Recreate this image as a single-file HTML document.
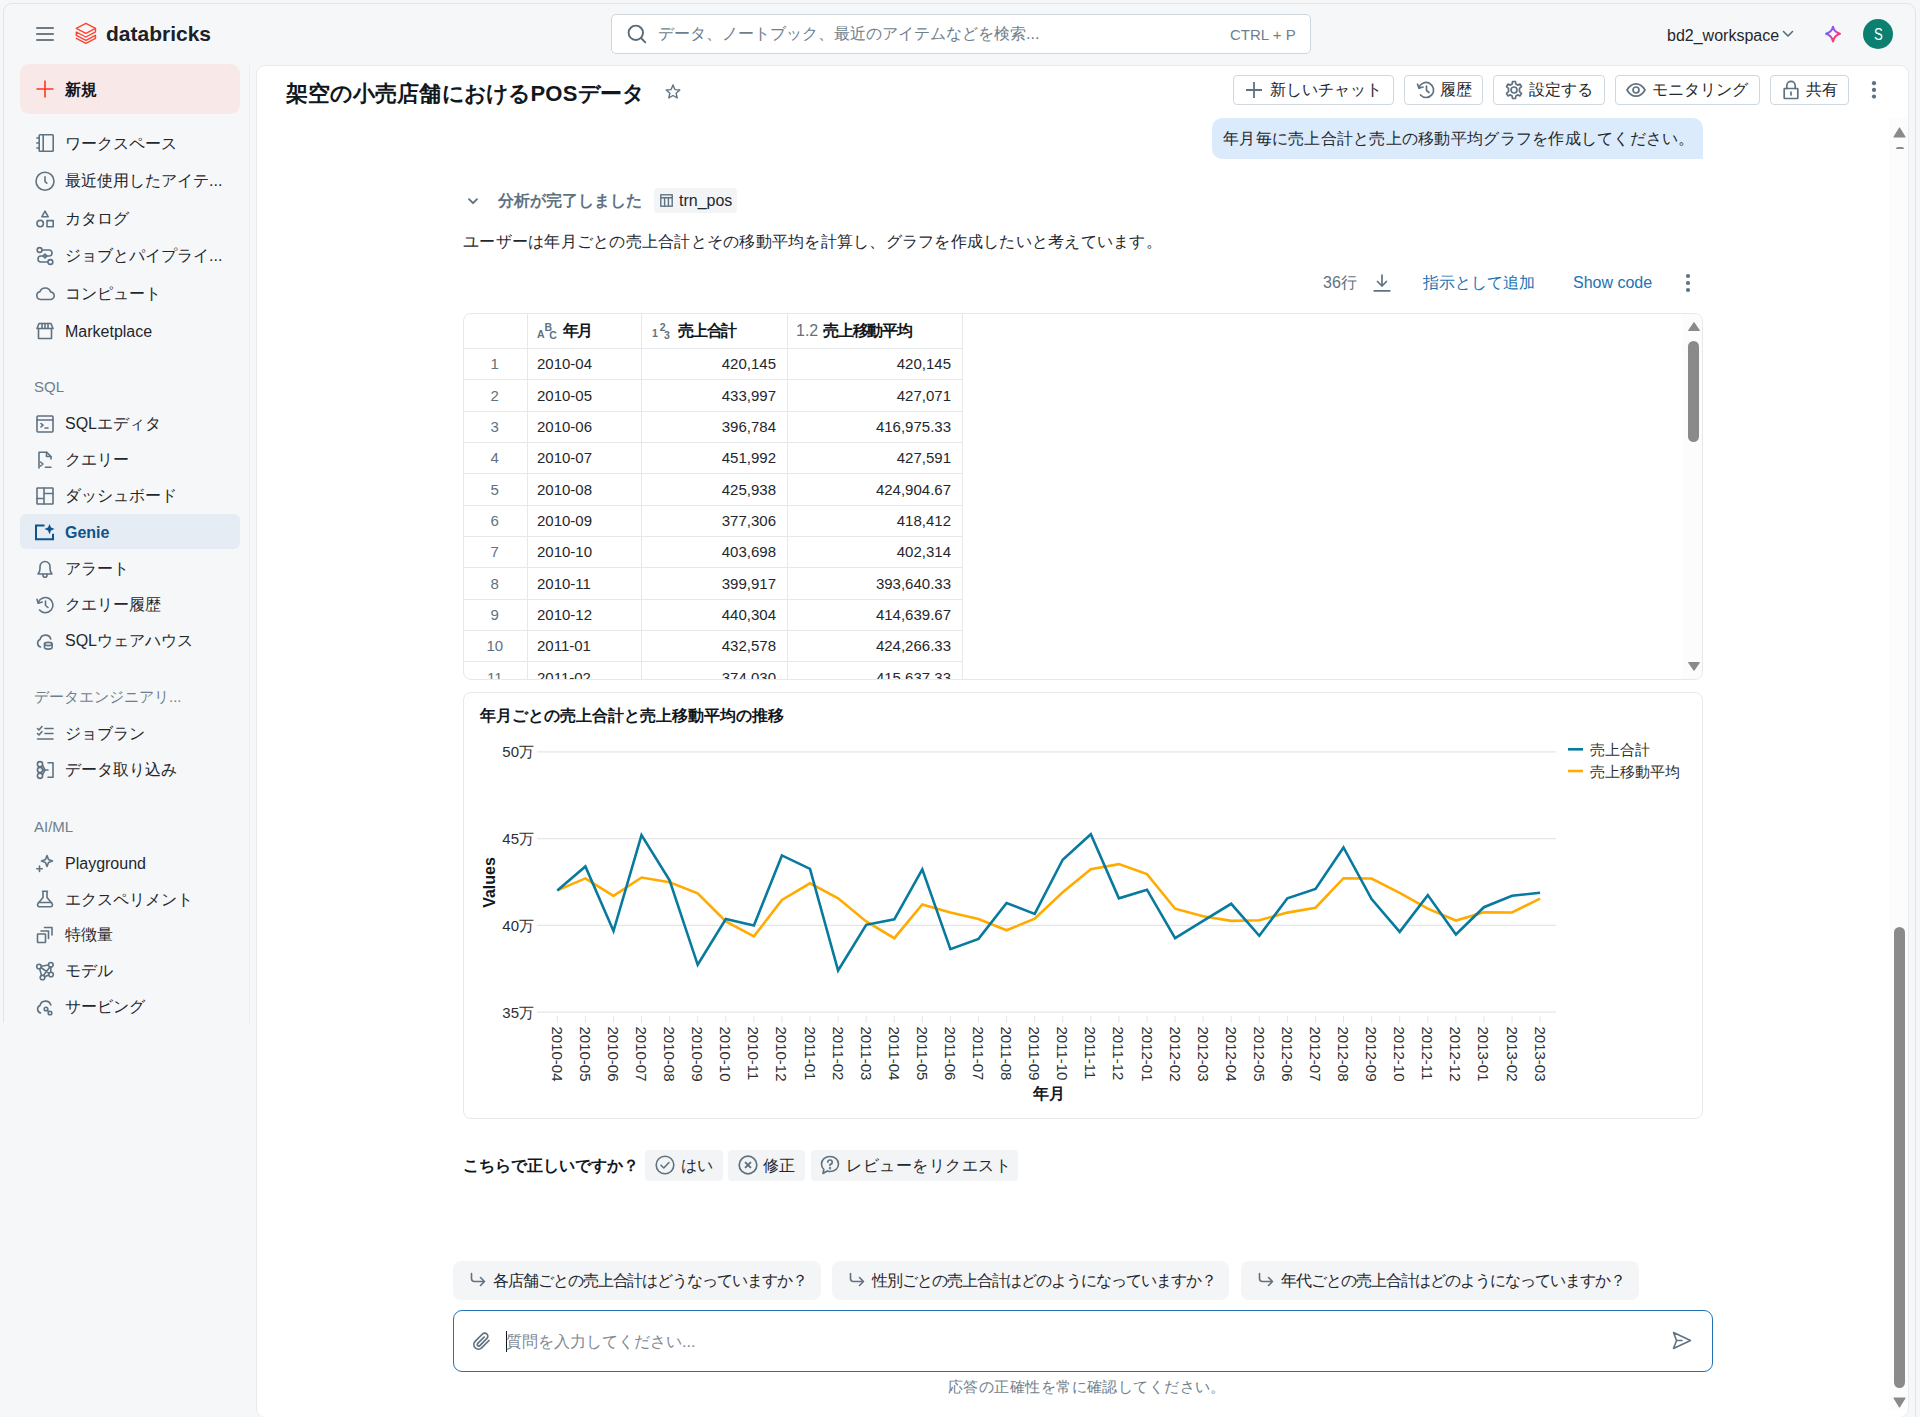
<!DOCTYPE html>
<html><head><meta charset="utf-8"><title>Genie</title><style>
*{box-sizing:border-box;margin:0;padding:0}
html,body{width:1920px;height:1417px;overflow:hidden;background:#f6f7f9;font-family:"Liberation Sans",sans-serif;color:#1f272d}
.a{position:absolute;white-space:nowrap}
.a i{display:inline-block;font-style:normal;text-align:left}
svg{display:block;overflow:visible}
.btn{position:absolute;height:30px;background:#fff;border:1px solid #cfd7df;border-radius:4px}
.chip{position:absolute;background:#f2f4f6;border-radius:4px}
</style></head><body>
<div class="a" style="left:3px;top:3px;width:1913px;height:1600px;border:1px solid #e4e4e4;border-radius:9px"></div>
<div class="a" style="left:0;top:1023px;width:12px;height:400px;background:#f6f7f9"></div>
<svg class="a" style="left:36px;top:27px" width="18" height="14" viewBox="0 0 18 14" ><path d="M0.8 1h16.4M0.8 7h16.4M0.8 13h16.4" stroke="#45535e" stroke-width="1.6" stroke-linecap="round"/></svg>
<svg class="a" style="left:75px;top:22px" width="22" height="23" viewBox="0 0 22 23" ><g fill="none" stroke="#ff4330" stroke-width="1.4" stroke-linejoin="round" stroke-linecap="round"><path d="M10.9 1.3 L20.5 6.4 L10.9 11.3 L1.3 6.4 Z"/><path d="M20.5 6.4 V9.8 L10.9 15 L1.3 10 V13.3 L10.9 18.4 L20.5 13.3 V16.3 L10.9 21.4 L1.3 16.3"/></g></svg>
<div class="a" style="left:106px;top:19.0px;font-size:21px;line-height:30px;color:#1b2126;font-weight:bold;">databricks</div>
<div class="a" style="left:611px;top:14px;width:700px;height:40px;background:#fff;border:1px solid #cdd5dd;border-radius:5px"></div>
<svg class="a" style="left:627px;top:24px" width="20" height="20" viewBox="0 0 20 20" ><circle cx="8.8" cy="8.8" r="7.2" fill="none" stroke="#5a6b78" stroke-width="1.9"/><path d="M14 14 L18.3 18.3" stroke="#5a6b78" stroke-width="1.9" stroke-linecap="round"/></svg>
<div class="a" style="left:658px;top:22.0px;font-size:16px;line-height:24px;color:#6f7e8b;font-weight:normal;"><i style="width:16px">デ</i><i style="width:16px">ー</i><i style="width:16px">タ</i><i style="width:16px">、</i><i style="width:16px">ノ</i><i style="width:16px">ー</i><i style="width:16px">ト</i><i style="width:16px">ブ</i><i style="width:16px">ッ</i><i style="width:16px">ク</i><i style="width:16px">、</i><i style="width:16px">最</i><i style="width:16px">近</i><i style="width:16px">の</i><i style="width:16px">ア</i><i style="width:16px">イ</i><i style="width:16px">テ</i><i style="width:16px">ム</i><i style="width:16px">な</i><i style="width:16px">ど</i><i style="width:16px">を</i><i style="width:16px">検</i><i style="width:16px">索</i>...</div>
<div class="a" style="left:1230px;top:24.0px;font-size:15px;line-height:22px;color:#6f7e8b;font-weight:normal;">CTRL + P</div>
<div class="a" style="left:1667px;top:24.0px;font-size:16px;line-height:24px;color:#1f272d;font-weight:normal;">bd2_workspace</div>
<svg class="a" style="left:1782px;top:30px" width="12" height="8" viewBox="0 0 12 8" ><path d="M1.5 1.5 L6 6 L10.5 1.5" fill="none" stroke="#5a6b78" stroke-width="1.6" stroke-linecap="round" stroke-linejoin="round"/></svg>
<svg class="a" style="left:1823px;top:24px" width="20" height="20" viewBox="0 0 20 20" ><defs><linearGradient id="sg" x1="0.1" y1="0.1" x2="0.9" y2="0.9"><stop offset="0" stop-color="#5b6ff2"/><stop offset=".45" stop-color="#b548e8"/><stop offset=".75" stop-color="#ff3a6e"/><stop offset="1" stop-color="#ff3a4a"/></linearGradient></defs><path d="M10 2.8 C10.9 6.6 12.6 8.6 17 9.7 C12.6 10.8 10.9 12.8 10 17.6 C9.1 12.8 7.4 10.8 3 9.7 C7.4 8.6 9.1 6.6 10 2.8 Z" fill="none" stroke="url(#sg)" stroke-width="2" stroke-linejoin="round"/></svg>
<div class="a" style="left:1863px;top:19px;width:30px;height:30px;border-radius:50%;background:#0b7f70;color:#fff;font-size:16px;line-height:31px;text-align:center"><span style="display:inline-block;transform:scaleX(0.82)">S</span></div>
<div class="a" style="left:20px;top:64px;width:220px;height:50px;background:#f9e8e8;border-radius:9px"></div>
<svg class="a" style="left:36px;top:80px" width="18" height="18" viewBox="0 0 18 18" ><path d="M9 0.5V17.5M0.5 9H17.5" stroke="#ff3621" stroke-width="1.6"/></svg>
<div class="a" style="left:65px;top:77.5px;font-size:16px;line-height:24px;color:#11171c;font-weight:bold;"><i style="width:16px">新</i><i style="width:16px">規</i></div>
<div class="a" style="left:20px;top:514px;width:220px;height:35px;background:#e5ecf3;border-radius:6px"></div>
<svg class="a" style="left:36px;top:134px" width="18" height="18" viewBox="0 0 18 18" ><g fill="none" stroke="#5f7281" stroke-width="1.6" stroke-linecap="round" stroke-linejoin="round"><rect x="3.2" y="0.8" width="14" height="16.5" rx="0.8"/><path d="M7.2 0.8V17.3M0.8 4h2.4M0.8 9h2.4M0.8 14h2.4"/></g></svg>
<div class="a" style="left:65px;top:131.5px;font-size:16px;line-height:24px;color:#1f272d;font-weight:normal;"><i style="width:16px">ワ</i><i style="width:16px">ー</i><i style="width:16px">ク</i><i style="width:16px">ス</i><i style="width:16px">ペ</i><i style="width:16px">ー</i><i style="width:16px">ス</i></div>
<svg class="a" style="left:36px;top:172px" width="18" height="18" viewBox="0 0 18 18" ><g fill="none" stroke="#5f7281" stroke-width="1.6" stroke-linecap="round" stroke-linejoin="round"><circle cx="9" cy="9.2" r="9"/><path d="M9 4.8V9.5L10.8 11.2"/></g></svg>
<div class="a" style="left:65px;top:169.0px;font-size:16px;line-height:24px;color:#1f272d;font-weight:normal;"><i style="width:16px">最</i><i style="width:16px">近</i><i style="width:16px">使</i><i style="width:16px">用</i><i style="width:16px">し</i><i style="width:16px">た</i><i style="width:16px">ア</i><i style="width:16px">イ</i><i style="width:16px">テ</i>...</div>
<svg class="a" style="left:36px;top:210px" width="18" height="18" viewBox="0 0 18 18" ><g fill="none" stroke="#5f7281" stroke-width="1.6" stroke-linecap="round" stroke-linejoin="round"><path d="M9 1.2L12.2 6.8H5.8Z"/><circle cx="4.2" cy="13.6" r="3.2"/><rect x="11" y="10.6" width="6.2" height="6.2"/></g></svg>
<div class="a" style="left:65px;top:206.5px;font-size:16px;line-height:24px;color:#1f272d;font-weight:normal;"><i style="width:16px">カ</i><i style="width:16px">タ</i><i style="width:16px">ロ</i><i style="width:16px">グ</i></div>
<svg class="a" style="left:36px;top:247px" width="18" height="18" viewBox="0 0 18 18" ><g fill="none" stroke="#5f7281" stroke-width="1.6" stroke-linecap="round" stroke-linejoin="round"><circle cx="3.6" cy="3" r="2.4"/><circle cx="14.4" cy="15" r="2.4"/><path d="M6 3H13A3 3 0 0 1 13 9H5A3 3 0 0 0 5 15H12"/><path d="M9 7L11 9L9 11L7 9Z"/></g></svg>
<div class="a" style="left:65px;top:244.0px;font-size:16px;line-height:24px;color:#1f272d;font-weight:normal;"><i style="width:16px">ジ</i><i style="width:16px">ョ</i><i style="width:16px">ブ</i><i style="width:16px">と</i><i style="width:16px">パ</i><i style="width:16px">イ</i><i style="width:16px">プ</i><i style="width:16px">ラ</i><i style="width:16px">イ</i>...</div>
<svg class="a" style="left:36px;top:284px" width="18" height="18" viewBox="0 0 18 18" ><g fill="none" stroke="#5f7281" stroke-width="1.6" stroke-linecap="round" stroke-linejoin="round"><path d="M4.5 15.5H14.2A3.8 3.8 0 0 0 14.6 7.9A5.6 5.6 0 0 0 4 7.6A4 4 0 0 0 4.5 15.5Z"/></g></svg>
<div class="a" style="left:65px;top:281.5px;font-size:16px;line-height:24px;color:#1f272d;font-weight:normal;"><i style="width:16px">コ</i><i style="width:16px">ン</i><i style="width:16px">ピ</i><i style="width:16px">ュ</i><i style="width:16px">ー</i><i style="width:16px">ト</i></div>
<svg class="a" style="left:36px;top:322px" width="18" height="18" viewBox="0 0 18 18" ><g fill="none" stroke="#5f7281" stroke-width="1.6" stroke-linecap="round" stroke-linejoin="round"><path d="M1 6.5L3 1.5H15L17 6.5Z"/><path d="M6 1.5V6.5M9 1.5V6.5M12 1.5V6.5"/><path d="M2.5 6.5V16.5H15.5V6.5"/></g></svg>
<div class="a" style="left:65px;top:319.5px;font-size:16px;line-height:24px;color:#1f272d;font-weight:normal;">Marketplace</div>
<svg class="a" style="left:36px;top:415px" width="18" height="18" viewBox="0 0 18 18" ><g fill="none" stroke="#5f7281" stroke-width="1.6" stroke-linecap="round" stroke-linejoin="round"><rect x="1" y="1" width="16" height="16" rx="1"/><path d="M1 5H17M5 8.5L7 10.2L5 12M9 13H12"/></g></svg>
<div class="a" style="left:65px;top:412.0px;font-size:16px;line-height:24px;color:#1f272d;font-weight:normal;">SQL<i style="width:16px">エ</i><i style="width:16px">デ</i><i style="width:16px">ィ</i><i style="width:16px">タ</i></div>
<svg class="a" style="left:36px;top:451px" width="18" height="18" viewBox="0 0 18 18" ><g fill="none" stroke="#5f7281" stroke-width="1.6" stroke-linecap="round" stroke-linejoin="round"><path d="M3 17V1.2H10.5L15 5.5V8"/><path d="M10.5 1.2V5.5H15"/><path d="M4.5 11L7 13L4.5 15M9.5 16.2H15"/></g></svg>
<div class="a" style="left:65px;top:448.0px;font-size:16px;line-height:24px;color:#1f272d;font-weight:normal;"><i style="width:16px">ク</i><i style="width:16px">エ</i><i style="width:16px">リ</i><i style="width:16px">ー</i></div>
<svg class="a" style="left:36px;top:487px" width="18" height="18" viewBox="0 0 18 18" ><g fill="none" stroke="#5f7281" stroke-width="1.6" stroke-linecap="round" stroke-linejoin="round"><rect x="1" y="1" width="16" height="16" rx="0.5"/><path d="M8 1V17M1 11.5H8M8 6.5H17"/></g></svg>
<div class="a" style="left:65px;top:484.0px;font-size:16px;line-height:24px;color:#1f272d;font-weight:normal;"><i style="width:16px">ダ</i><i style="width:16px">ッ</i><i style="width:16px">シ</i><i style="width:16px">ュ</i><i style="width:16px">ボ</i><i style="width:16px">ー</i><i style="width:16px">ド</i></div>
<svg class="a" style="left:35px;top:524px" width="18" height="18" viewBox="0 0 18 18" ><g fill="none" stroke="#0e538b" stroke-width="2" stroke-linecap="square"><path d="M8.5 1.5H1V15.2H18V10.8"/></g><path d="M14.5 0L16 3.6L19.6 5.1L16 6.6L14.5 10.2L13 6.6L9.4 5.1L13 3.6Z" fill="#0e538b"/></svg>
<div class="a" style="left:65px;top:521.3px;font-size:16px;line-height:24px;color:#0e538b;font-weight:bold;">Genie</div>
<svg class="a" style="left:36px;top:560px" width="18" height="18" viewBox="0 0 18 18" ><g fill="none" stroke="#5f7281" stroke-width="1.6" stroke-linecap="round" stroke-linejoin="round"><path d="M2 14H16C14.5 12.5 14 11 14 8.5V6.5A5 5 0 0 0 4 6.5V8.5C4 11 3.5 12.5 2 14Z"/><path d="M7 14.2V15.2A2 2 0 0 0 11 15.2V14.2"/></g></svg>
<div class="a" style="left:65px;top:556.5px;font-size:16px;line-height:24px;color:#1f272d;font-weight:normal;"><i style="width:16px">ア</i><i style="width:16px">ラ</i><i style="width:16px">ー</i><i style="width:16px">ト</i></div>
<svg class="a" style="left:36px;top:596px" width="18" height="18" viewBox="0 0 18 18" ><g fill="none" stroke="#5f7281" stroke-width="1.6" stroke-linecap="round" stroke-linejoin="round"><path d="M2.2 6.5A7.6 7.6 0 1 1 3.5 14"/><path d="M1 3.2L2.2 7.2L6.2 6"/><path d="M9.5 5V9.5L12 11.5"/></g></svg>
<div class="a" style="left:65px;top:592.5px;font-size:16px;line-height:24px;color:#1f272d;font-weight:normal;"><i style="width:16px">ク</i><i style="width:16px">エ</i><i style="width:16px">リ</i><i style="width:16px">ー</i><i style="width:16px">履</i><i style="width:16px">歴</i></div>
<svg class="a" style="left:36px;top:632px" width="18" height="18" viewBox="0 0 18 18" ><g fill="none" stroke="#5f7281" stroke-width="1.6" stroke-linecap="round" stroke-linejoin="round"><path d="M4.5 15A4 4 0 0 1 4 7.5A5.6 5.6 0 0 1 14.8 7"/><ellipse cx="12.3" cy="12" rx="3.8" ry="1.6"/><path d="M8.5 12V15.5A3.8 1.6 0 0 0 16.1 15.5V12"/></g></svg>
<div class="a" style="left:65px;top:628.5px;font-size:16px;line-height:24px;color:#1f272d;font-weight:normal;">SQL<i style="width:16px">ウ</i><i style="width:16px">ェ</i><i style="width:16px">ア</i><i style="width:16px">ハ</i><i style="width:16px">ウ</i><i style="width:16px">ス</i></div>
<svg class="a" style="left:36px;top:725px" width="18" height="18" viewBox="0 0 18 18" ><g fill="none" stroke="#5f7281" stroke-width="1.6" stroke-linecap="round" stroke-linejoin="round"><path d="M1.5 3.5L3 5L6 1.5M1.5 8.5L3 10L6 6.5"/><path d="M9 3.5H17M9 8.5H17M1.5 14H17"/></g></svg>
<div class="a" style="left:65px;top:722.0px;font-size:16px;line-height:24px;color:#1f272d;font-weight:normal;"><i style="width:16px">ジ</i><i style="width:16px">ョ</i><i style="width:16px">ブ</i><i style="width:16px">ラ</i><i style="width:16px">ン</i></div>
<svg class="a" style="left:36px;top:761px" width="18" height="18" viewBox="0 0 18 18" ><g fill="none" stroke="#5f7281" stroke-width="1.6" stroke-linecap="round" stroke-linejoin="round"><circle cx="4" cy="3.2" r="2.6"/><circle cx="4" cy="9" r="2.6"/><circle cx="4" cy="14.8" r="2.6"/><path d="M6.4 4.2L9 9L6.4 13.8M6.6 9H12"/><path d="M12 1.8H17V16.2H12"/></g></svg>
<div class="a" style="left:65px;top:758.0px;font-size:16px;line-height:24px;color:#1f272d;font-weight:normal;"><i style="width:16px">デ</i><i style="width:16px">ー</i><i style="width:16px">タ</i><i style="width:16px">取</i><i style="width:16px">り</i><i style="width:16px">込</i><i style="width:16px">み</i></div>
<svg class="a" style="left:36px;top:854px" width="18" height="18" viewBox="0 0 18 18" ><g fill="none" stroke="#5f7281" stroke-width="1.6" stroke-linecap="round" stroke-linejoin="round"><path d="M11 1.5L12.5 5.5L16.5 7L12.5 8.5L11 12.5L9.5 8.5L5.5 7L9.5 5.5Z"/><path d="M3.5 12V17.5M0.8 14.8H6.2"/></g></svg>
<div class="a" style="left:65px;top:851.5px;font-size:16px;line-height:24px;color:#1f272d;font-weight:normal;">Playground</div>
<svg class="a" style="left:36px;top:890px" width="18" height="18" viewBox="0 0 18 18" ><g fill="none" stroke="#5f7281" stroke-width="1.6" stroke-linecap="round" stroke-linejoin="round"><path d="M6.5 1.2H11.5M7 1.2V7.5L2 13.5A2 2 0 0 0 3.5 16.8H14.5A2 2 0 0 0 16 13.5L11 7.5V1.2"/><path d="M2.5 12.5H15.5"/></g></svg>
<div class="a" style="left:65px;top:887.5px;font-size:16px;line-height:24px;color:#1f272d;font-weight:normal;"><i style="width:16px">エ</i><i style="width:16px">ク</i><i style="width:16px">ス</i><i style="width:16px">ペ</i><i style="width:16px">リ</i><i style="width:16px">メ</i><i style="width:16px">ン</i><i style="width:16px">ト</i></div>
<svg class="a" style="left:36px;top:926px" width="18" height="18" viewBox="0 0 18 18" ><g fill="none" stroke="#5f7281" stroke-width="1.6" stroke-linecap="round" stroke-linejoin="round"><rect x="1.5" y="8" width="8" height="8.5" rx="0.5"/><path d="M5 5H12.5V12.5M8.5 1.5H16V9"/></g></svg>
<div class="a" style="left:65px;top:923.0px;font-size:16px;line-height:24px;color:#1f272d;font-weight:normal;"><i style="width:16px">特</i><i style="width:16px">徴</i><i style="width:16px">量</i></div>
<svg class="a" style="left:36px;top:962px" width="18" height="18" viewBox="0 0 18 18" ><g fill="none" stroke="#5f7281" stroke-width="1.6" stroke-linecap="round" stroke-linejoin="round"><circle cx="3" cy="4.5" r="2.3"/><circle cx="14.8" cy="2.8" r="2.3"/><circle cx="15" cy="12.5" r="2.3"/><circle cx="6.5" cy="15.5" r="2.3"/><path d="M5.2 4.2L12.6 3M14.8 5V10.3M12.8 13.1L8.7 14.8M5.6 13.4L3.6 6.7M5 5.5L13 11.3M13.9 5L7.4 13.4"/></g></svg>
<div class="a" style="left:65px;top:958.5px;font-size:16px;line-height:24px;color:#1f272d;font-weight:normal;"><i style="width:16px">モ</i><i style="width:16px">デ</i><i style="width:16px">ル</i></div>
<svg class="a" style="left:36px;top:998px" width="18" height="18" viewBox="0 0 18 18" ><g fill="none" stroke="#5f7281" stroke-width="1.6" stroke-linecap="round" stroke-linejoin="round"><path d="M4.5 15A4 4 0 0 1 4 7.5A5.6 5.6 0 0 1 14.8 7"/><circle cx="10" cy="11" r="1.8"/><circle cx="14" cy="15" r="1.8"/><path d="M11.3 12.3L12.7 13.7"/></g></svg>
<div class="a" style="left:65px;top:994.5px;font-size:16px;line-height:24px;color:#1f272d;font-weight:normal;"><i style="width:16px">サ</i><i style="width:16px">ー</i><i style="width:16px">ビ</i><i style="width:16px">ン</i><i style="width:16px">グ</i></div>
<div class="a" style="left:34px;top:376.0px;font-size:15px;line-height:22px;color:#6f7e8b;font-weight:normal;">SQL</div>
<div class="a" style="left:34px;top:686.0px;font-size:15px;line-height:22px;color:#6f7e8b;font-weight:normal;"><i style="width:15px">デ</i><i style="width:15px">ー</i><i style="width:15px">タ</i><i style="width:15px">エ</i><i style="width:15px">ン</i><i style="width:15px">ジ</i><i style="width:15px">ニ</i><i style="width:15px">ア</i><i style="width:15px">リ</i>...</div>
<div class="a" style="left:34px;top:815.5px;font-size:15px;line-height:22px;color:#6f7e8b;font-weight:normal;">AI/ML</div>
<div class="a" style="left:256px;top:65px;width:1653px;height:1353px;background:#fff;border:1px solid #e8ebee;border-radius:9px"></div>
<div class="a" style="left:249px;top:65px;width:1px;height:960px;background:#eceef1"></div>
<div class="a" style="left:286px;top:77.5px;font-size:22px;line-height:32px;color:#11171c;font-weight:bold;letter-spacing:0.22px"><i style="width:22.22px">架</i><i style="width:22.22px">空</i><i style="width:22.22px">の</i><i style="width:22.22px">小</i><i style="width:22.22px">売</i><i style="width:22.22px">店</i><i style="width:22.22px">舗</i><i style="width:22.22px">に</i><i style="width:22.22px">お</i><i style="width:22.22px">け</i><i style="width:22.22px">る</i>POS<i style="width:22.22px">デ</i><i style="width:22.22px">ー</i><i style="width:22.22px">タ</i></div>
<svg class="a" style="left:665px;top:84px" width="16" height="15" viewBox="0 0 16 15" ><path d="M8 1L9.9 5.6L14.8 6L11.1 9.2L12.2 14L8 11.5L3.8 14L4.9 9.2L1.2 6L6.1 5.6Z" fill="none" stroke="#5f7281" stroke-width="1.4" stroke-linejoin="round"/></svg>
<div class="btn" style="left:1233px;top:75px;width:161px"></div>
<svg class="a" style="left:1245px;top:81px" width="18" height="18" viewBox="0 0 18 18" ><path d="M9 1V17M1 9H17" stroke="#5f7281" stroke-width="1.8"/></svg>
<div class="a" style="left:1270px;top:78.0px;font-size:16px;line-height:24px;color:#1f272d;font-weight:normal;"><i style="width:16px">新</i><i style="width:16px">し</i><i style="width:16px">い</i><i style="width:16px">チ</i><i style="width:16px">ャ</i><i style="width:16px">ッ</i><i style="width:16px">ト</i></div>
<div class="btn" style="left:1404px;top:75px;width:79px"></div>
<svg class="a" style="left:1416px;top:80px" width="20" height="20" viewBox="0 0 20 20" ><g fill="none" stroke="#5f7281" stroke-width="1.7" stroke-linecap="round" stroke-linejoin="round"><path d="M3 7.5A7.5 7.5 0 1 1 4.5 15"/><path d="M1.5 4.2L3 8.2L7 7"/><path d="M10.5 6V10.5L13 12.5"/></g></svg>
<div class="a" style="left:1440px;top:78.0px;font-size:16px;line-height:24px;color:#1f272d;font-weight:normal;"><i style="width:16px">履</i><i style="width:16px">歴</i></div>
<div class="btn" style="left:1493px;top:75px;width:112px"></div>
<svg class="a" style="left:1504px;top:80px" width="20" height="20" viewBox="0 0 20 20" ><g fill="none" stroke="#5f7281" stroke-width="1.7" stroke-linecap="round" stroke-linejoin="round"><circle cx="10" cy="10" r="3"/><path d="M8.6 1.5H11.4L11.9 4.1L13.6 5.1L16.1 4.1L17.5 6.6L15.5 8.4V11.6L17.5 13.4L16.1 15.9L13.6 14.9L11.9 15.9L11.4 18.5H8.6L8.1 15.9L6.4 14.9L3.9 15.9L2.5 13.4L4.5 11.6V8.4L2.5 6.6L3.9 4.1L6.4 5.1L8.1 4.1Z"/></g></svg>
<div class="a" style="left:1529px;top:78.0px;font-size:16px;line-height:24px;color:#1f272d;font-weight:normal;"><i style="width:16px">設</i><i style="width:16px">定</i><i style="width:16px">す</i><i style="width:16px">る</i></div>
<div class="btn" style="left:1615px;top:75px;width:145px"></div>
<svg class="a" style="left:1626px;top:81px" width="20" height="18" viewBox="0 0 20 18" ><g fill="none" stroke="#5f7281" stroke-width="1.7" stroke-linecap="round" stroke-linejoin="round"><path d="M1 9C3.5 4.5 6.5 2.8 10 2.8S16.5 4.5 19 9C16.5 13.5 13.5 15.2 10 15.2S3.5 13.5 1 9Z"/><circle cx="10" cy="9" r="3"/></g></svg>
<div class="a" style="left:1652px;top:78.0px;font-size:16px;line-height:24px;color:#1f272d;font-weight:normal;"><i style="width:16px">モ</i><i style="width:16px">ニ</i><i style="width:16px">タ</i><i style="width:16px">リ</i><i style="width:16px">ン</i><i style="width:16px">グ</i></div>
<div class="btn" style="left:1770px;top:75px;width:79px"></div>
<svg class="a" style="left:1783px;top:80px" width="16" height="20" viewBox="0 0 16 20" ><g fill="none" stroke="#5f7281" stroke-width="1.7" stroke-linecap="round" stroke-linejoin="round"><rect x="1.2" y="8.5" width="13.6" height="10" rx="0.5"/><path d="M3.8 8.5V5.5A4.2 4.2 0 0 1 12.2 5.5V8.5M8 12V15"/></g></svg>
<div class="a" style="left:1806px;top:78.0px;font-size:16px;line-height:24px;color:#1f272d;font-weight:normal;"><i style="width:16px">共</i><i style="width:16px">有</i></div>
<svg class="a" style="left:1871px;top:80px" width="6" height="20" viewBox="0 0 6 20" ><g fill="#5f7281"><circle cx="3" cy="3.2" r="2.1"/><circle cx="3" cy="9.9" r="2.1"/><circle cx="3" cy="16.6" r="2.1"/></g></svg>
<div class="a" style="left:1212px;top:118px;width:491px;height:41px;background:#dcebfb;border-radius:10px 10px 0 10px"></div>
<div class="a" style="left:1223px;top:127.0px;font-size:16px;line-height:24px;color:#1f272d;font-weight:normal;letter-spacing:0.27px"><i style="width:16.27px">年</i><i style="width:16.27px">月</i><i style="width:16.27px">毎</i><i style="width:16.27px">に</i><i style="width:16.27px">売</i><i style="width:16.27px">上</i><i style="width:16.27px">合</i><i style="width:16.27px">計</i><i style="width:16.27px">と</i><i style="width:16.27px">売</i><i style="width:16.27px">上</i><i style="width:16.27px">の</i><i style="width:16.27px">移</i><i style="width:16.27px">動</i><i style="width:16.27px">平</i><i style="width:16.27px">均</i><i style="width:16.27px">グ</i><i style="width:16.27px">ラ</i><i style="width:16.27px">フ</i><i style="width:16.27px">を</i><i style="width:16.27px">作</i><i style="width:16.27px">成</i><i style="width:16.27px">し</i><i style="width:16.27px">て</i><i style="width:16.27px">く</i><i style="width:16.27px">だ</i><i style="width:16.27px">さ</i><i style="width:16.27px">い</i><i style="width:16.27px">。</i></div>
<svg class="a" style="left:467px;top:197px" width="12" height="9" viewBox="0 0 12 9" ><path d="M2 2.2L6 6.2L10 2.2" fill="none" stroke="#5f7281" stroke-width="1.9" stroke-linecap="round" stroke-linejoin="round"/></svg>
<div class="a" style="left:498px;top:189.0px;font-size:16px;line-height:24px;color:#5f7281;font-weight:bold;"><i style="width:16px">分</i><i style="width:16px">析</i><i style="width:16px">が</i><i style="width:16px">完</i><i style="width:16px">了</i><i style="width:16px">し</i><i style="width:16px">ま</i><i style="width:16px">し</i><i style="width:16px">た</i></div>
<div class="chip" style="left:654px;top:188px;width:83px;height:25px"></div>
<svg class="a" style="left:660px;top:194px" width="13" height="13" viewBox="0 0 13 13" ><g fill="none" stroke="#5f7281" stroke-width="1.4"><rect x="0.8" y="0.8" width="11.4" height="11.4"/><path d="M0.8 3.8H12.2M4.6 3.8V12.2M8.4 3.8V12.2"/></g></svg>
<div class="a" style="left:679px;top:189.0px;font-size:16px;line-height:24px;color:#1f272d;font-weight:normal;">trn_pos</div>
<div class="a" style="left:463px;top:230.0px;font-size:16px;line-height:24px;color:#1f272d;font-weight:normal;letter-spacing:0.25px"><i style="width:16.25px">ユ</i><i style="width:16.25px">ー</i><i style="width:16.25px">ザ</i><i style="width:16.25px">ー</i><i style="width:16.25px">は</i><i style="width:16.25px">年</i><i style="width:16.25px">月</i><i style="width:16.25px">ご</i><i style="width:16.25px">と</i><i style="width:16.25px">の</i><i style="width:16.25px">売</i><i style="width:16.25px">上</i><i style="width:16.25px">合</i><i style="width:16.25px">計</i><i style="width:16.25px">と</i><i style="width:16.25px">そ</i><i style="width:16.25px">の</i><i style="width:16.25px">移</i><i style="width:16.25px">動</i><i style="width:16.25px">平</i><i style="width:16.25px">均</i><i style="width:16.25px">を</i><i style="width:16.25px">計</i><i style="width:16.25px">算</i><i style="width:16.25px">し</i><i style="width:16.25px">、</i><i style="width:16.25px">グ</i><i style="width:16.25px">ラ</i><i style="width:16.25px">フ</i><i style="width:16.25px">を</i><i style="width:16.25px">作</i><i style="width:16.25px">成</i><i style="width:16.25px">し</i><i style="width:16.25px">た</i><i style="width:16.25px">い</i><i style="width:16.25px">と</i><i style="width:16.25px">考</i><i style="width:16.25px">え</i><i style="width:16.25px">て</i><i style="width:16.25px">い</i><i style="width:16.25px">ま</i><i style="width:16.25px">す</i><i style="width:16.25px">。</i></div>
<div class="a" style="left:1323px;top:271.0px;font-size:16px;line-height:24px;color:#5f7281;font-weight:normal;">36<i style="width:16px">行</i></div>
<svg class="a" style="left:1373px;top:274px" width="18" height="18" viewBox="0 0 18 18" ><g fill="none" stroke="#5f7281" stroke-width="1.7" stroke-linecap="round" stroke-linejoin="round"><path d="M9 1V12M4.5 7.5L9 12L13.5 7.5M1.2 16.8H16.8"/></g></svg>
<div class="a" style="left:1423px;top:271.0px;font-size:16px;line-height:24px;color:#2272b4;font-weight:normal;"><i style="width:16px">指</i><i style="width:16px">示</i><i style="width:16px">と</i><i style="width:16px">し</i><i style="width:16px">て</i><i style="width:16px">追</i><i style="width:16px">加</i></div>
<div class="a" style="left:1573px;top:271.0px;font-size:16px;line-height:24px;color:#2272b4;font-weight:normal;">Show code</div>
<svg class="a" style="left:1685px;top:273px" width="6" height="20" viewBox="0 0 6 20" ><g fill="#5f7281"><circle cx="3" cy="3" r="2.1"/><circle cx="3" cy="10" r="2.1"/><circle cx="3" cy="17" r="2.1"/></g></svg>
<div class="a" style="left:463px;top:313px;width:1240px;height:367px;border:1px solid #e6e9ec;border-radius:8px;overflow:hidden;background:#fff">
<div class="a" style="left:0;top:34.0px;width:497.5px;height:1px;background:#e6e9ec"></div>
<div class="a" style="left:0;top:65.3px;width:497.5px;height:1px;background:#e6e9ec"></div>
<div class="a" style="left:0;top:96.7px;width:497.5px;height:1px;background:#e6e9ec"></div>
<div class="a" style="left:0;top:128.0px;width:497.5px;height:1px;background:#e6e9ec"></div>
<div class="a" style="left:0;top:159.4px;width:497.5px;height:1px;background:#e6e9ec"></div>
<div class="a" style="left:0;top:190.7px;width:497.5px;height:1px;background:#e6e9ec"></div>
<div class="a" style="left:0;top:222.0px;width:497.5px;height:1px;background:#e6e9ec"></div>
<div class="a" style="left:0;top:253.4px;width:497.5px;height:1px;background:#e6e9ec"></div>
<div class="a" style="left:0;top:284.7px;width:497.5px;height:1px;background:#e6e9ec"></div>
<div class="a" style="left:0;top:316.1px;width:497.5px;height:1px;background:#e6e9ec"></div>
<div class="a" style="left:0;top:347.4px;width:497.5px;height:1px;background:#e6e9ec"></div>
<div class="a" style="left:0;top:378.7px;width:497.5px;height:1px;background:#e6e9ec"></div>
<div class="a" style="left:62.5px;top:0;width:1px;height:400px;background:#e6e9ec"></div>
<div class="a" style="left:177.0px;top:0;width:1px;height:400px;background:#e6e9ec"></div>
<div class="a" style="left:322.5px;top:0;width:1px;height:400px;background:#e6e9ec"></div>
<div class="a" style="left:497.5px;top:0;width:1px;height:400px;background:#e6e9ec"></div>
<svg class="a" style="left:73px;top:8px" width="19" height="17" viewBox="0 0 19 17" ><g fill="#5f7281" font-family="Liberation Sans" font-size="10.5" font-weight="bold"><text x="0" y="15.5">A</text><text x="7.6" y="9">B</text><text x="12.3" y="17">C</text></g></svg>
<div class="a" style="left:98.5px;top:4.5px;font-size:16px;line-height:24px;color:#11171c;font-weight:bold;letter-spacing:-1.5px"><i style="width:14.5px">年</i><i style="width:14.5px">月</i></div>
<svg class="a" style="left:188px;top:8px" width="20" height="17" viewBox="0 0 20 17" ><g fill="#5f7281" font-family="Liberation Sans" font-size="10.5" font-weight="bold"><text x="0" y="14.8">1</text><text x="7.8" y="9.3">2</text><text x="12" y="17.1">3</text></g></svg>
<div class="a" style="left:213.5px;top:4.5px;font-size:16px;line-height:24px;color:#11171c;font-weight:bold;letter-spacing:-1.5px"><i style="width:14.5px">売</i><i style="width:14.5px">上</i><i style="width:14.5px">合</i><i style="width:14.5px">計</i></div>
<div class="a" style="left:332px;top:4.5px;font-size:16px;line-height:24px;color:#5f7281;font-weight:normal;">1.2</div>
<div class="a" style="left:359px;top:4.5px;font-size:16px;line-height:24px;color:#11171c;font-weight:bold;letter-spacing:-1.2px"><i style="width:14.8px">売</i><i style="width:14.8px">上</i><i style="width:14.8px">移</i><i style="width:14.8px">動</i><i style="width:14.8px">平</i><i style="width:14.8px">均</i></div>
<div class="a" style="left:-1px;top:38.2px;width:63.5px;text-align:center;font-size:15px;line-height:24px;color:#5f7281">1</div>
<div class="a" style="left:73px;top:39.2px;font-size:15px;line-height:22px;color:#1f272d;font-weight:normal;">2010-04</div>
<div class="a" style="left:177.0px;top:38.2px;width:135.0px;text-align:right;font-size:15px;line-height:24px;color:#1f272d">420,145</div>
<div class="a" style="left:322.5px;top:38.2px;width:164.5px;text-align:right;font-size:15px;line-height:24px;color:#1f272d">420,145</div>
<div class="a" style="left:-1px;top:69.5px;width:63.5px;text-align:center;font-size:15px;line-height:24px;color:#5f7281">2</div>
<div class="a" style="left:73px;top:70.5px;font-size:15px;line-height:22px;color:#1f272d;font-weight:normal;">2010-05</div>
<div class="a" style="left:177.0px;top:69.5px;width:135.0px;text-align:right;font-size:15px;line-height:24px;color:#1f272d">433,997</div>
<div class="a" style="left:322.5px;top:69.5px;width:164.5px;text-align:right;font-size:15px;line-height:24px;color:#1f272d">427,071</div>
<div class="a" style="left:-1px;top:100.9px;width:63.5px;text-align:center;font-size:15px;line-height:24px;color:#5f7281">3</div>
<div class="a" style="left:73px;top:101.9px;font-size:15px;line-height:22px;color:#1f272d;font-weight:normal;">2010-06</div>
<div class="a" style="left:177.0px;top:100.9px;width:135.0px;text-align:right;font-size:15px;line-height:24px;color:#1f272d">396,784</div>
<div class="a" style="left:322.5px;top:100.9px;width:164.5px;text-align:right;font-size:15px;line-height:24px;color:#1f272d">416,975.33</div>
<div class="a" style="left:-1px;top:132.2px;width:63.5px;text-align:center;font-size:15px;line-height:24px;color:#5f7281">4</div>
<div class="a" style="left:73px;top:133.2px;font-size:15px;line-height:22px;color:#1f272d;font-weight:normal;">2010-07</div>
<div class="a" style="left:177.0px;top:132.2px;width:135.0px;text-align:right;font-size:15px;line-height:24px;color:#1f272d">451,992</div>
<div class="a" style="left:322.5px;top:132.2px;width:164.5px;text-align:right;font-size:15px;line-height:24px;color:#1f272d">427,591</div>
<div class="a" style="left:-1px;top:163.5px;width:63.5px;text-align:center;font-size:15px;line-height:24px;color:#5f7281">5</div>
<div class="a" style="left:73px;top:164.5px;font-size:15px;line-height:22px;color:#1f272d;font-weight:normal;">2010-08</div>
<div class="a" style="left:177.0px;top:163.5px;width:135.0px;text-align:right;font-size:15px;line-height:24px;color:#1f272d">425,938</div>
<div class="a" style="left:322.5px;top:163.5px;width:164.5px;text-align:right;font-size:15px;line-height:24px;color:#1f272d">424,904.67</div>
<div class="a" style="left:-1px;top:194.9px;width:63.5px;text-align:center;font-size:15px;line-height:24px;color:#5f7281">6</div>
<div class="a" style="left:73px;top:195.9px;font-size:15px;line-height:22px;color:#1f272d;font-weight:normal;">2010-09</div>
<div class="a" style="left:177.0px;top:194.9px;width:135.0px;text-align:right;font-size:15px;line-height:24px;color:#1f272d">377,306</div>
<div class="a" style="left:322.5px;top:194.9px;width:164.5px;text-align:right;font-size:15px;line-height:24px;color:#1f272d">418,412</div>
<div class="a" style="left:-1px;top:226.2px;width:63.5px;text-align:center;font-size:15px;line-height:24px;color:#5f7281">7</div>
<div class="a" style="left:73px;top:227.2px;font-size:15px;line-height:22px;color:#1f272d;font-weight:normal;">2010-10</div>
<div class="a" style="left:177.0px;top:226.2px;width:135.0px;text-align:right;font-size:15px;line-height:24px;color:#1f272d">403,698</div>
<div class="a" style="left:322.5px;top:226.2px;width:164.5px;text-align:right;font-size:15px;line-height:24px;color:#1f272d">402,314</div>
<div class="a" style="left:-1px;top:257.5px;width:63.5px;text-align:center;font-size:15px;line-height:24px;color:#5f7281">8</div>
<div class="a" style="left:73px;top:258.5px;font-size:15px;line-height:22px;color:#1f272d;font-weight:normal;">2010-11</div>
<div class="a" style="left:177.0px;top:257.5px;width:135.0px;text-align:right;font-size:15px;line-height:24px;color:#1f272d">399,917</div>
<div class="a" style="left:322.5px;top:257.5px;width:164.5px;text-align:right;font-size:15px;line-height:24px;color:#1f272d">393,640.33</div>
<div class="a" style="left:-1px;top:288.9px;width:63.5px;text-align:center;font-size:15px;line-height:24px;color:#5f7281">9</div>
<div class="a" style="left:73px;top:289.9px;font-size:15px;line-height:22px;color:#1f272d;font-weight:normal;">2010-12</div>
<div class="a" style="left:177.0px;top:288.9px;width:135.0px;text-align:right;font-size:15px;line-height:24px;color:#1f272d">440,304</div>
<div class="a" style="left:322.5px;top:288.9px;width:164.5px;text-align:right;font-size:15px;line-height:24px;color:#1f272d">414,639.67</div>
<div class="a" style="left:-1px;top:320.2px;width:63.5px;text-align:center;font-size:15px;line-height:24px;color:#5f7281">10</div>
<div class="a" style="left:73px;top:321.2px;font-size:15px;line-height:22px;color:#1f272d;font-weight:normal;">2011-01</div>
<div class="a" style="left:177.0px;top:320.2px;width:135.0px;text-align:right;font-size:15px;line-height:24px;color:#1f272d">432,578</div>
<div class="a" style="left:322.5px;top:320.2px;width:164.5px;text-align:right;font-size:15px;line-height:24px;color:#1f272d">424,266.33</div>
<div class="a" style="left:-1px;top:351.6px;width:63.5px;text-align:center;font-size:15px;line-height:24px;color:#5f7281">11</div>
<div class="a" style="left:73px;top:352.6px;font-size:15px;line-height:22px;color:#1f272d;font-weight:normal;">2011-02</div>
<div class="a" style="left:177.0px;top:351.6px;width:135.0px;text-align:right;font-size:15px;line-height:24px;color:#1f272d">374,030</div>
<div class="a" style="left:322.5px;top:351.6px;width:164.5px;text-align:right;font-size:15px;line-height:24px;color:#1f272d">415,637.33</div>
<div class="a" style="left:1218px;top:0;width:21px;height:367px;background:#fcfcfc"></div>
<svg class="a" style="left:1224px;top:8px" width="12" height="9" viewBox="0 0 12 9" ><path d="M6 0.5L11.5 8.5H0.5Z" fill="#8a8a8a" stroke="#8a8a8a" stroke-width="1" stroke-linejoin="round"/></svg>
<div class="a" style="left:1224px;top:27px;width:11px;height:101px;background:#8a8a8a;border-radius:6px"></div>
<svg class="a" style="left:1224px;top:348px" width="12" height="9" viewBox="0 0 12 9" ><path d="M6 8.5L11.5 0.5H0.5Z" fill="#8a8a8a" stroke="#8a8a8a" stroke-width="1" stroke-linejoin="round"/></svg>
</div>
<div class="a" style="left:463px;top:692px;width:1240px;height:427px;border:1px solid #e6e9ec;border-radius:8px;background:#fff"></div>
<div class="a" style="left:480px;top:703.5px;font-size:16px;line-height:24px;color:#11171c;font-weight:bold;"><i style="width:16px">年</i><i style="width:16px">月</i><i style="width:16px">ご</i><i style="width:16px">と</i><i style="width:16px">の</i><i style="width:16px">売</i><i style="width:16px">上</i><i style="width:16px">合</i><i style="width:16px">計</i><i style="width:16px">と</i><i style="width:16px">売</i><i style="width:16px">上</i><i style="width:16px">移</i><i style="width:16px">動</i><i style="width:16px">平</i><i style="width:16px">均</i><i style="width:16px">の</i><i style="width:16px">推</i><i style="width:16px">移</i></div>
<svg class="a" style="left:0;top:0" width="1920" height="1417" viewBox="0 0 1920 1417" font-family="Liberation Sans, sans-serif"><line x1="537" y1="751.8" x2="1556" y2="751.8" stroke="#e6e6e6" stroke-width="1.3"/><text x="534" y="757.3" text-anchor="end" font-size="15" fill="#2b2f33">50万</text><line x1="537" y1="838.6" x2="1556" y2="838.6" stroke="#e6e6e6" stroke-width="1.3"/><text x="534" y="844.1" text-anchor="end" font-size="15" fill="#2b2f33">45万</text><line x1="537" y1="925.4" x2="1556" y2="925.4" stroke="#e6e6e6" stroke-width="1.3"/><text x="534" y="930.9" text-anchor="end" font-size="15" fill="#2b2f33">40万</text><line x1="537" y1="1012.2" x2="1556" y2="1012.2" stroke="#e6e6e6" stroke-width="1.3"/><text x="534" y="1017.7" text-anchor="end" font-size="15" fill="#2b2f33">35万</text><line x1="557.3" y1="1016" x2="557.3" y2="1023" stroke="#e6e6e6" stroke-width="1"/><text transform="translate(551.8,1026.5) rotate(90)" font-size="15" fill="#2b2f33">2010-04</text><line x1="585.4" y1="1016" x2="585.4" y2="1023" stroke="#e6e6e6" stroke-width="1"/><text transform="translate(579.9,1026.5) rotate(90)" font-size="15" fill="#2b2f33">2010-05</text><line x1="613.5" y1="1016" x2="613.5" y2="1023" stroke="#e6e6e6" stroke-width="1"/><text transform="translate(608.0,1026.5) rotate(90)" font-size="15" fill="#2b2f33">2010-06</text><line x1="641.5" y1="1016" x2="641.5" y2="1023" stroke="#e6e6e6" stroke-width="1"/><text transform="translate(636.0,1026.5) rotate(90)" font-size="15" fill="#2b2f33">2010-07</text><line x1="669.6" y1="1016" x2="669.6" y2="1023" stroke="#e6e6e6" stroke-width="1"/><text transform="translate(664.1,1026.5) rotate(90)" font-size="15" fill="#2b2f33">2010-08</text><line x1="697.7" y1="1016" x2="697.7" y2="1023" stroke="#e6e6e6" stroke-width="1"/><text transform="translate(692.2,1026.5) rotate(90)" font-size="15" fill="#2b2f33">2010-09</text><line x1="725.8" y1="1016" x2="725.8" y2="1023" stroke="#e6e6e6" stroke-width="1"/><text transform="translate(720.3,1026.5) rotate(90)" font-size="15" fill="#2b2f33">2010-10</text><line x1="753.9" y1="1016" x2="753.9" y2="1023" stroke="#e6e6e6" stroke-width="1"/><text transform="translate(748.4,1026.5) rotate(90)" font-size="15" fill="#2b2f33">2010-11</text><line x1="781.9" y1="1016" x2="781.9" y2="1023" stroke="#e6e6e6" stroke-width="1"/><text transform="translate(776.4,1026.5) rotate(90)" font-size="15" fill="#2b2f33">2010-12</text><line x1="810.0" y1="1016" x2="810.0" y2="1023" stroke="#e6e6e6" stroke-width="1"/><text transform="translate(804.5,1026.5) rotate(90)" font-size="15" fill="#2b2f33">2011-01</text><line x1="838.1" y1="1016" x2="838.1" y2="1023" stroke="#e6e6e6" stroke-width="1"/><text transform="translate(832.6,1026.5) rotate(90)" font-size="15" fill="#2b2f33">2011-02</text><line x1="866.2" y1="1016" x2="866.2" y2="1023" stroke="#e6e6e6" stroke-width="1"/><text transform="translate(860.7,1026.5) rotate(90)" font-size="15" fill="#2b2f33">2011-03</text><line x1="894.3" y1="1016" x2="894.3" y2="1023" stroke="#e6e6e6" stroke-width="1"/><text transform="translate(888.8,1026.5) rotate(90)" font-size="15" fill="#2b2f33">2011-04</text><line x1="922.3" y1="1016" x2="922.3" y2="1023" stroke="#e6e6e6" stroke-width="1"/><text transform="translate(916.8,1026.5) rotate(90)" font-size="15" fill="#2b2f33">2011-05</text><line x1="950.4" y1="1016" x2="950.4" y2="1023" stroke="#e6e6e6" stroke-width="1"/><text transform="translate(944.9,1026.5) rotate(90)" font-size="15" fill="#2b2f33">2011-06</text><line x1="978.5" y1="1016" x2="978.5" y2="1023" stroke="#e6e6e6" stroke-width="1"/><text transform="translate(973.0,1026.5) rotate(90)" font-size="15" fill="#2b2f33">2011-07</text><line x1="1006.6" y1="1016" x2="1006.6" y2="1023" stroke="#e6e6e6" stroke-width="1"/><text transform="translate(1001.1,1026.5) rotate(90)" font-size="15" fill="#2b2f33">2011-08</text><line x1="1034.7" y1="1016" x2="1034.7" y2="1023" stroke="#e6e6e6" stroke-width="1"/><text transform="translate(1029.2,1026.5) rotate(90)" font-size="15" fill="#2b2f33">2011-09</text><line x1="1062.7" y1="1016" x2="1062.7" y2="1023" stroke="#e6e6e6" stroke-width="1"/><text transform="translate(1057.2,1026.5) rotate(90)" font-size="15" fill="#2b2f33">2011-10</text><line x1="1090.8" y1="1016" x2="1090.8" y2="1023" stroke="#e6e6e6" stroke-width="1"/><text transform="translate(1085.3,1026.5) rotate(90)" font-size="15" fill="#2b2f33">2011-11</text><line x1="1118.9" y1="1016" x2="1118.9" y2="1023" stroke="#e6e6e6" stroke-width="1"/><text transform="translate(1113.4,1026.5) rotate(90)" font-size="15" fill="#2b2f33">2011-12</text><line x1="1147.0" y1="1016" x2="1147.0" y2="1023" stroke="#e6e6e6" stroke-width="1"/><text transform="translate(1141.5,1026.5) rotate(90)" font-size="15" fill="#2b2f33">2012-01</text><line x1="1175.1" y1="1016" x2="1175.1" y2="1023" stroke="#e6e6e6" stroke-width="1"/><text transform="translate(1169.6,1026.5) rotate(90)" font-size="15" fill="#2b2f33">2012-02</text><line x1="1203.1" y1="1016" x2="1203.1" y2="1023" stroke="#e6e6e6" stroke-width="1"/><text transform="translate(1197.6,1026.5) rotate(90)" font-size="15" fill="#2b2f33">2012-03</text><line x1="1231.2" y1="1016" x2="1231.2" y2="1023" stroke="#e6e6e6" stroke-width="1"/><text transform="translate(1225.7,1026.5) rotate(90)" font-size="15" fill="#2b2f33">2012-04</text><line x1="1259.3" y1="1016" x2="1259.3" y2="1023" stroke="#e6e6e6" stroke-width="1"/><text transform="translate(1253.8,1026.5) rotate(90)" font-size="15" fill="#2b2f33">2012-05</text><line x1="1287.4" y1="1016" x2="1287.4" y2="1023" stroke="#e6e6e6" stroke-width="1"/><text transform="translate(1281.9,1026.5) rotate(90)" font-size="15" fill="#2b2f33">2012-06</text><line x1="1315.5" y1="1016" x2="1315.5" y2="1023" stroke="#e6e6e6" stroke-width="1"/><text transform="translate(1310.0,1026.5) rotate(90)" font-size="15" fill="#2b2f33">2012-07</text><line x1="1343.5" y1="1016" x2="1343.5" y2="1023" stroke="#e6e6e6" stroke-width="1"/><text transform="translate(1338.0,1026.5) rotate(90)" font-size="15" fill="#2b2f33">2012-08</text><line x1="1371.6" y1="1016" x2="1371.6" y2="1023" stroke="#e6e6e6" stroke-width="1"/><text transform="translate(1366.1,1026.5) rotate(90)" font-size="15" fill="#2b2f33">2012-09</text><line x1="1399.7" y1="1016" x2="1399.7" y2="1023" stroke="#e6e6e6" stroke-width="1"/><text transform="translate(1394.2,1026.5) rotate(90)" font-size="15" fill="#2b2f33">2012-10</text><line x1="1427.8" y1="1016" x2="1427.8" y2="1023" stroke="#e6e6e6" stroke-width="1"/><text transform="translate(1422.3,1026.5) rotate(90)" font-size="15" fill="#2b2f33">2012-11</text><line x1="1455.9" y1="1016" x2="1455.9" y2="1023" stroke="#e6e6e6" stroke-width="1"/><text transform="translate(1450.4,1026.5) rotate(90)" font-size="15" fill="#2b2f33">2012-12</text><line x1="1483.9" y1="1016" x2="1483.9" y2="1023" stroke="#e6e6e6" stroke-width="1"/><text transform="translate(1478.4,1026.5) rotate(90)" font-size="15" fill="#2b2f33">2013-01</text><line x1="1512.0" y1="1016" x2="1512.0" y2="1023" stroke="#e6e6e6" stroke-width="1"/><text transform="translate(1506.5,1026.5) rotate(90)" font-size="15" fill="#2b2f33">2013-02</text><line x1="1540.1" y1="1016" x2="1540.1" y2="1023" stroke="#e6e6e6" stroke-width="1"/><text transform="translate(1534.6,1026.5) rotate(90)" font-size="15" fill="#2b2f33">2013-03</text><polyline points="557.3,890.4 585.4,878.4 613.5,895.9 641.5,877.5 669.6,882.2 697.7,893.4 725.8,921.4 753.9,936.4 781.9,900.0 810.0,883.3 838.1,898.3 866.2,921.4 894.3,938.2 922.3,904.5 950.4,912.6 978.5,919.1 1006.6,930.3 1034.7,918.6 1062.7,892.2 1090.8,869.3 1118.9,864.1 1147.0,874.1 1175.1,908.7 1203.1,916.2 1231.2,920.9 1259.3,920.2 1287.4,912.6 1315.5,907.7 1343.5,878.2 1371.6,878.5 1399.7,892.8 1427.8,908.7 1455.9,920.5 1483.9,912.3 1512.0,912.5 1540.1,898.6" fill="none" stroke="#ffab00" stroke-width="2.6" stroke-linejoin="miter" stroke-miterlimit="3"/><polyline points="557.3,890.4 585.4,866.4 613.5,931.0 641.5,835.1 669.6,880.4 697.7,964.8 725.8,919.0 753.9,925.5 781.9,855.4 810.0,868.8 838.1,970.5 866.2,924.8 894.3,919.4 922.3,869.4 950.4,949.1 978.5,938.9 1006.6,903.0 1034.7,913.9 1062.7,859.7 1090.8,834.2 1118.9,898.3 1147.0,889.7 1175.1,938.1 1203.1,920.9 1231.2,903.8 1259.3,935.8 1287.4,898.3 1315.5,888.9 1343.5,847.5 1371.6,899.1 1399.7,931.9 1427.8,895.1 1455.9,934.5 1483.9,907.2 1512.0,895.8 1540.1,892.8" fill="none" stroke="#077a9d" stroke-width="2.6" stroke-linejoin="miter" stroke-miterlimit="3"/><text transform="translate(494.5,882.5) rotate(-90)" text-anchor="middle" font-size="16" font-weight="bold" fill="#11171c">Values</text><text x="1048.5" y="1099" text-anchor="middle" font-size="16" font-weight="bold" fill="#11171c">年月</text><line x1="1568" y1="749.3" x2="1583" y2="749.3" stroke="#077a9d" stroke-width="2.6"/><line x1="1568" y1="771" x2="1583" y2="771" stroke="#ffab00" stroke-width="2.6"/><text x="1589.5" y="755" font-size="15" fill="#2b2f33">売上合計</text><text x="1589.5" y="776.5" font-size="15" fill="#2b2f33">売上移動平均</text></svg>
<div class="a" style="left:463px;top:1153.5px;font-size:16px;line-height:24px;color:#11171c;font-weight:bold;"><i style="width:16px">こ</i><i style="width:16px">ち</i><i style="width:16px">ら</i><i style="width:16px">で</i><i style="width:16px">正</i><i style="width:16px">し</i><i style="width:16px">い</i><i style="width:16px">で</i><i style="width:16px">す</i><i style="width:16px">か</i><i style="width:16px">？</i></div>
<div class="chip" style="left:645px;top:1150px;width:78px;height:31px"></div>
<svg class="a" style="left:655px;top:1155px" width="20" height="20" viewBox="0 0 20 20" ><g fill="none" stroke="#5f7281" stroke-width="1.6" stroke-linecap="round" stroke-linejoin="round"><circle cx="10" cy="10" r="8.8"/><path d="M6 10.2L8.8 13L14 7.5"/></g></svg>
<div class="a" style="left:681px;top:1153.5px;font-size:16px;line-height:24px;color:#1f272d;font-weight:normal;"><i style="width:16px">は</i><i style="width:16px">い</i></div>
<div class="chip" style="left:728px;top:1150px;width:77px;height:31px"></div>
<svg class="a" style="left:738px;top:1155px" width="20" height="20" viewBox="0 0 20 20" ><g fill="none" stroke="#5f7281" stroke-width="1.7" stroke-linecap="round" stroke-linejoin="round"><circle cx="10" cy="10" r="8.8"/><path d="M7.6 7.6L12.4 12.4M12.4 7.6L7.6 12.4" stroke-width="2"/></g></svg>
<div class="a" style="left:763px;top:1153.5px;font-size:16px;line-height:24px;color:#1f272d;font-weight:normal;"><i style="width:16px">修</i><i style="width:16px">正</i></div>
<div class="chip" style="left:811px;top:1150px;width:207px;height:31px"></div>
<svg class="a" style="left:820px;top:1155px" width="20" height="20" viewBox="0 0 20 20" ><g fill="none" stroke="#5f7281" stroke-width="1.6" stroke-linecap="round" stroke-linejoin="round"><path d="M10 1.5C14.8 1.5 18.5 4.8 18.5 9S14.8 16.5 10 16.5C9 16.5 8 16.3 7.2 16L3 18.5L3.8 14.3C2.3 12.9 1.5 11 1.5 9C1.5 4.8 5.2 1.5 10 1.5Z"/><path d="M7.8 7.2A2.2 2.2 0 1 1 10 9.4V10.6"/><circle cx="10" cy="13.2" r="0.4" fill="#5f7281"/></g></svg>
<div class="a" style="left:846px;top:1153.5px;font-size:16px;line-height:24px;color:#1f272d;font-weight:normal;letter-spacing:0.5px"><i style="width:16.5px">レ</i><i style="width:16.5px">ビ</i><i style="width:16.5px">ュ</i><i style="width:16.5px">ー</i><i style="width:16.5px">を</i><i style="width:16.5px">リ</i><i style="width:16.5px">ク</i><i style="width:16.5px">エ</i><i style="width:16.5px">ス</i><i style="width:16.5px">ト</i></div>
<div class="a" style="left:453px;top:1261px;width:368px;height:39px;background:#f4f5f7;border-radius:8px"></div>
<svg class="a" style="left:470px;top:1272px" width="16" height="16" viewBox="0 0 16 16" ><g fill="none" stroke="#5f7281" stroke-width="1.6" stroke-linecap="round" stroke-linejoin="round"><path d="M1.5 1.5V6.5A3 3 0 0 0 4.5 9.5H14.5M10.5 5.5L14.5 9.5L10.5 13.5"/></g></svg>
<div class="a" style="left:493px;top:1269.0px;font-size:16px;line-height:24px;color:#1f272d;font-weight:normal;letter-spacing:-1.05px"><i style="width:14.95px">各</i><i style="width:14.95px">店</i><i style="width:14.95px">舗</i><i style="width:14.95px">ご</i><i style="width:14.95px">と</i><i style="width:14.95px">の</i><i style="width:14.95px">売</i><i style="width:14.95px">上</i><i style="width:14.95px">合</i><i style="width:14.95px">計</i><i style="width:14.95px">は</i><i style="width:14.95px">ど</i><i style="width:14.95px">う</i><i style="width:14.95px">な</i><i style="width:14.95px">っ</i><i style="width:14.95px">て</i><i style="width:14.95px">い</i><i style="width:14.95px">ま</i><i style="width:14.95px">す</i><i style="width:14.95px">か</i><i style="width:14.95px">？</i></div>
<div class="a" style="left:832px;top:1261px;width:397px;height:39px;background:#f4f5f7;border-radius:8px"></div>
<svg class="a" style="left:849px;top:1272px" width="16" height="16" viewBox="0 0 16 16" ><g fill="none" stroke="#5f7281" stroke-width="1.6" stroke-linecap="round" stroke-linejoin="round"><path d="M1.5 1.5V6.5A3 3 0 0 0 4.5 9.5H14.5M10.5 5.5L14.5 9.5L10.5 13.5"/></g></svg>
<div class="a" style="left:872px;top:1269.0px;font-size:16px;line-height:24px;color:#1f272d;font-weight:normal;letter-spacing:-1.05px"><i style="width:14.95px">性</i><i style="width:14.95px">別</i><i style="width:14.95px">ご</i><i style="width:14.95px">と</i><i style="width:14.95px">の</i><i style="width:14.95px">売</i><i style="width:14.95px">上</i><i style="width:14.95px">合</i><i style="width:14.95px">計</i><i style="width:14.95px">は</i><i style="width:14.95px">ど</i><i style="width:14.95px">の</i><i style="width:14.95px">よ</i><i style="width:14.95px">う</i><i style="width:14.95px">に</i><i style="width:14.95px">な</i><i style="width:14.95px">っ</i><i style="width:14.95px">て</i><i style="width:14.95px">い</i><i style="width:14.95px">ま</i><i style="width:14.95px">す</i><i style="width:14.95px">か</i><i style="width:14.95px">？</i></div>
<div class="a" style="left:1241px;top:1261px;width:398px;height:39px;background:#f4f5f7;border-radius:8px"></div>
<svg class="a" style="left:1258px;top:1272px" width="16" height="16" viewBox="0 0 16 16" ><g fill="none" stroke="#5f7281" stroke-width="1.6" stroke-linecap="round" stroke-linejoin="round"><path d="M1.5 1.5V6.5A3 3 0 0 0 4.5 9.5H14.5M10.5 5.5L14.5 9.5L10.5 13.5"/></g></svg>
<div class="a" style="left:1281px;top:1269.0px;font-size:16px;line-height:24px;color:#1f272d;font-weight:normal;letter-spacing:-1.05px"><i style="width:14.95px">年</i><i style="width:14.95px">代</i><i style="width:14.95px">ご</i><i style="width:14.95px">と</i><i style="width:14.95px">の</i><i style="width:14.95px">売</i><i style="width:14.95px">上</i><i style="width:14.95px">合</i><i style="width:14.95px">計</i><i style="width:14.95px">は</i><i style="width:14.95px">ど</i><i style="width:14.95px">の</i><i style="width:14.95px">よ</i><i style="width:14.95px">う</i><i style="width:14.95px">に</i><i style="width:14.95px">な</i><i style="width:14.95px">っ</i><i style="width:14.95px">て</i><i style="width:14.95px">い</i><i style="width:14.95px">ま</i><i style="width:14.95px">す</i><i style="width:14.95px">か</i><i style="width:14.95px">？</i></div>
<div class="a" style="left:453px;top:1310px;width:1260px;height:62px;border:1.5px solid #2272b4;border-radius:9px;background:#fff"></div>
<svg class="a" style="left:472px;top:1331px" width="20" height="21" viewBox="0 0 20 21" ><path d="M17 9.5L9.6 16.9A4.6 4.6 0 0 1 3.1 10.4L10.5 3A3.1 3.1 0 0 1 14.9 7.4L7.6 14.8A1.5 1.5 0 0 1 5.5 12.7L12.2 6" fill="none" stroke="#5f7281" stroke-width="1.7" stroke-linecap="round" stroke-linejoin="round"/></svg>
<div class="a" style="left:506px;top:1331px;width:1.2px;height:21px;background:#11171c"></div>
<div class="a" style="left:506px;top:1329.5px;font-size:16px;line-height:24px;color:#7d8a95;font-weight:normal;"><i style="width:16px">質</i><i style="width:16px">問</i><i style="width:16px">を</i><i style="width:16px">入</i><i style="width:16px">力</i><i style="width:16px">し</i><i style="width:16px">て</i><i style="width:16px">く</i><i style="width:16px">だ</i><i style="width:16px">さ</i><i style="width:16px">い</i>...</div>
<svg class="a" style="left:1672px;top:1331px" width="20" height="19" viewBox="0 0 20 19" ><path d="M1.5 1.5L18.5 9.5L1.5 17.5L4.5 9.5Z M4.5 9.5H10" fill="none" stroke="#5f7281" stroke-width="1.6" stroke-linecap="round" stroke-linejoin="round"/></svg>
<div class="a" style="left:948px;top:1377.0px;font-size:14.5px;line-height:21px;color:#6f7e8b;font-weight:normal;letter-spacing:0.95px"><i style="width:15.45px">応</i><i style="width:15.45px">答</i><i style="width:15.45px">の</i><i style="width:15.45px">正</i><i style="width:15.45px">確</i><i style="width:15.45px">性</i><i style="width:15.45px">を</i><i style="width:15.45px">常</i><i style="width:15.45px">に</i><i style="width:15.45px">確</i><i style="width:15.45px">認</i><i style="width:15.45px">し</i><i style="width:15.45px">て</i><i style="width:15.45px">く</i><i style="width:15.45px">だ</i><i style="width:15.45px">さ</i><i style="width:15.45px">い</i><i style="width:15.45px">。</i></div>
<div class="a" style="left:1889px;top:118px;width:19px;height:1292px;background:#fcfcfc"></div>
<svg class="a" style="left:1893px;top:127px" width="13" height="11" viewBox="0 0 13 11" ><path d="M6.5 1L12 10H1Z" fill="#8a8a8a" stroke="#8a8a8a" stroke-width="1.2" stroke-linejoin="round"/></svg>
<div class="a" style="left:1896px;top:147px;width:8px;height:2px;background:#8a8a8a;border-radius:2px 2px 0 0"></div>
<div class="a" style="left:1894px;top:927px;width:11px;height:461px;background:#8a8a8a;border-radius:6px"></div>
<svg class="a" style="left:1893px;top:1397px" width="13" height="11" viewBox="0 0 13 11" ><path d="M6.5 10L12 1H1Z" fill="#8a8a8a" stroke="#8a8a8a" stroke-width="1.2" stroke-linejoin="round"/></svg>
</body></html>
